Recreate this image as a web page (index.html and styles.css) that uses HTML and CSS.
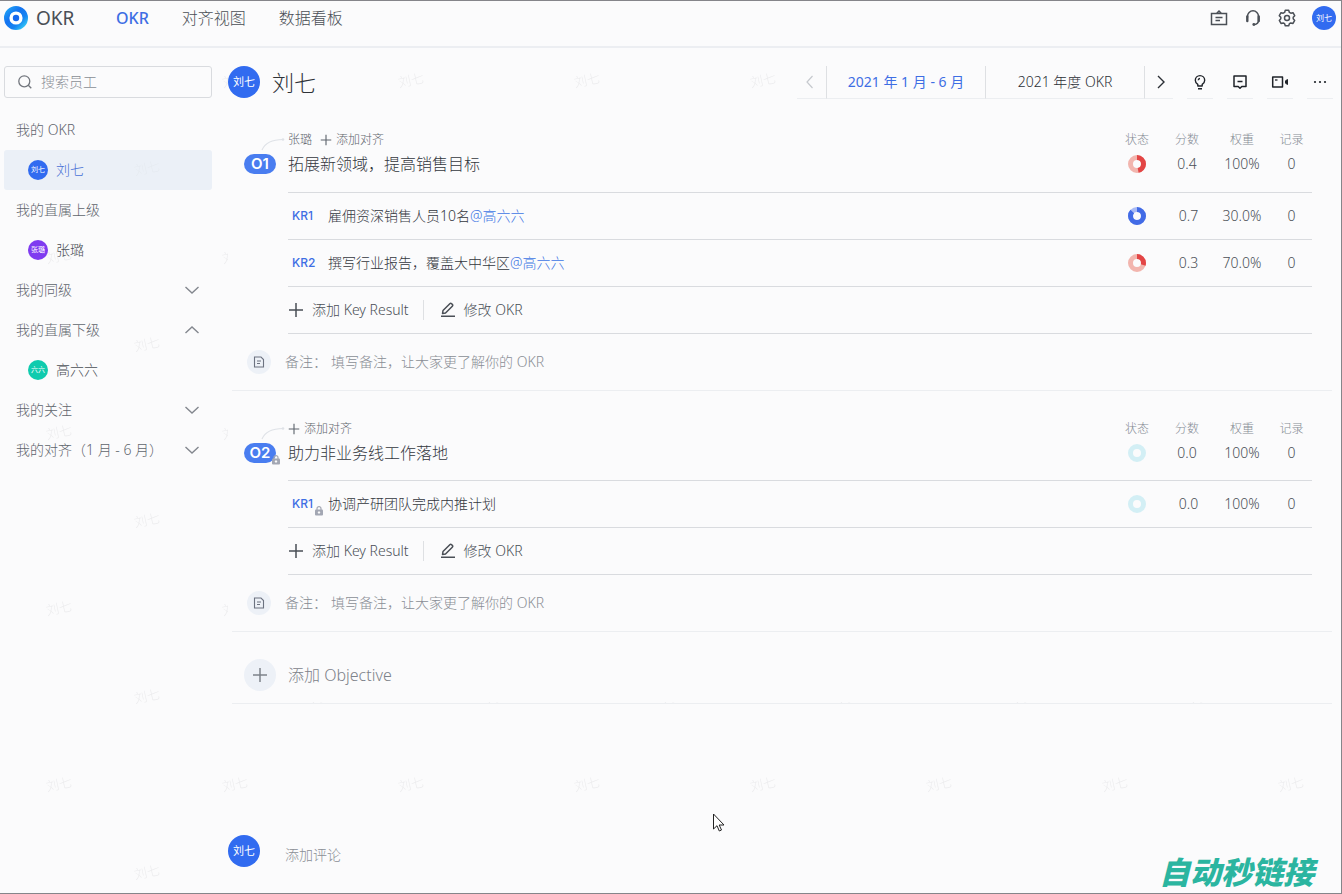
FILE: index.html
```html
<!DOCTYPE html>
<html lang="zh-CN">
<head>
<meta charset="utf-8">
<meta name="viewport" content="width=device-width, initial-scale=1">
<title>OKR</title>
<link rel="stylesheet" href="styles.css">
</head>
<body>
<svg class="defs" width="0" height="0" aria-hidden="true">
  <defs>
    <linearGradient id="logo-ring" x1="0" y1="0" x2="1" y2="1">
      <stop offset="0" stop-color="#1fa2f5"/><stop offset=".35" stop-color="#1473f0"/><stop offset=".7" stop-color="#1684f2"/><stop offset="1" stop-color="#35cdf5"/>
    </linearGradient>
    <symbol id="plus" viewBox="0 0 16 16"><path d="M8 1v14M1 8h14" fill="none" stroke="currentColor" stroke-width="1.5"/></symbol>
    <symbol id="down" viewBox="0 0 16 16"><path d="M1.5 5 8 11l6.500-6" fill="none" stroke="currentColor" stroke-width="1.400"/></symbol>
    <symbol id="up" viewBox="0 0 16 16"><path d="M1.500 11 8 5l6.500 6" fill="none" stroke="currentColor" stroke-width="1.400"/></symbol>
    <symbol id="pen" viewBox="0 0 16 16"><path d="M2.500 11.500 3 8.500l6.800-6.800a1.300 1.300 0 0 1 1.800 0l.7.7a1.300 1.300 0 0 1 0 1.800L5.500 11zM1 14.300h14" fill="none" stroke="currentColor" stroke-width="1.500" stroke-linejoin="round"/></symbol>
    <symbol id="note" viewBox="0 0 12 12"><path d="M1.500 1h6.500L10.500 3.500V11h-9zM4 5h4M4 7.500h3" fill="none" stroke="currentColor" stroke-width="1.100"/></symbol>
    <symbol id="lock" viewBox="0 0 10 10"><path d="M3 4V2.700a2 2 0 0 1 4 0V4" fill="none" stroke="#a3a7b3" stroke-width="1.200"/><rect x="1" y="3.500" width="8" height="6" rx="1" fill="#a3a7b3"/><path d="M5 5v3M3.800 6.500h2.400" stroke="#fff" stroke-width=".9"/></symbol>
    <symbol id="curve" viewBox="0 0 56 24"><path d="M30 20C33 13 40 9.500 51 9.500" fill="none" stroke="#dfe2e7" stroke-width="1.200"/><circle cx="51" cy="9.500" r="1.300" fill="#dfe2e7"/></symbol>
    <pattern id="marks" width="176" height="176" patternUnits="userSpaceOnUse">
      <text class="mark" x="46" y="85" transform="rotate(-12 59 80)">刘七</text>
      <text class="mark" x="134" y="173" transform="rotate(-12 147 168)">刘七</text>
    </pattern>
  </defs>
</svg>

<div class="app">
  <svg class="marks-layer" aria-hidden="true">
    <rect width="228" height="894" fill="url(#marks)"/>
    <rect x="390" y="60" width="400" height="45" fill="url(#marks)"/>
    <rect x="228" y="702" width="1114" height="100" fill="url(#marks)"/>
  </svg>

  <header class="topbar">
    <div class="brand">
      <svg width="24" height="24" viewBox="0 0 24 24" aria-hidden="true"><circle cx="12" cy="12" r="9.300" fill="#fff" stroke="url(#logo-ring)" stroke-width="5.400"/><circle cx="12" cy="12" r="3.200" fill="#1668ee"/></svg>
      <span>OKR</span>
    </div>
    <nav class="topnav">
      <a href="#" class="active">OKR</a>
      <a href="#">对齐视图</a>
      <a href="#">数据看板</a>
    </nav>
    <div class="tools">
      <button aria-label="工作台"><svg width="18" height="18" viewBox="0 0 18 18"><path d="M1.500 4.500h15v11h-15zM6.500 4.500 9 2l2.500 2.500M5.500 8.500h7M5.500 11.500h4.500" fill="none" stroke="currentColor" stroke-width="1.500"/></svg></button>
      <button aria-label="客服"><svg width="18" height="18" viewBox="0 0 18 18"><path d="M3.500 8.500V7.300a5.500 5.500 0 0 1 11 0v4.200c0 2-1.500 3.700-4.300 4.200" fill="none" stroke="currentColor" stroke-width="1.500"/><path d="M3.300 7.500v4.500M14.700 7.500v4.500" stroke="currentColor" stroke-width="2.400" stroke-linecap="round"/><circle cx="9.800" cy="15.500" r="1.400" fill="currentColor"/></svg></button>
      <button aria-label="设置"><svg width="18" height="18" viewBox="0 0 18 18"><path d="M7.300 1.300h3.400l.7 2.100 1.400.8 2.200-.5 1.700 3-1.500 1.600v1.500l1.500 1.600-1.700 3-2.200-.5-1.400.8-.7 2.100H7.300l-.7-2.100-1.400-.8-2.200.5-1.700-3 1.500-1.600V8.300L1.300 6.700l1.700-3 2.200.5 1.400-.8z" fill="none" stroke="currentColor" stroke-width="1.500" stroke-linejoin="round"/><circle cx="9" cy="9" r="2.500" fill="none" stroke="currentColor" stroke-width="1.500"/></svg></button>
      <span class="avatar avatar-m">刘七</span>
    </div>
  </header>

  <div class="body">
    <aside class="sidebar">
      <label class="search">
        <svg width="16" height="16" viewBox="0 0 16 16" aria-hidden="true"><circle cx="7.300" cy="7.300" r="5.500" fill="none" stroke="currentColor" stroke-width="1.300"/><path d="m11.300 11.300 3 3" stroke="currentColor" stroke-width="1.300"/></svg>
        <input type="text" placeholder="搜索员工" aria-label="搜索员工">
      </label>
      <div class="side-row">我的 OKR</div>
      <a href="#" class="person selected"><span class="avatar avatar-s">刘七</span>刘七</a>
      <div class="side-row">我的直属上级</div>
      <a href="#" class="person"><span class="avatar avatar-s purple">张璐</span>张璐</a>
      <button class="side-row">我的同级<svg width="16" height="16"><use href="#down"/></svg></button>
      <button class="side-row">我的直属下级<svg width="16" height="16"><use href="#up"/></svg></button>
      <a href="#" class="person"><span class="avatar avatar-s green">六六</span>高六六</a>
      <button class="side-row">我的关注<svg width="16" height="16"><use href="#down"/></svg></button>
      <button class="side-row">我的对齐（1 月 - 6 月）<svg width="16" height="16"><use href="#down"/></svg></button>
    </aside>

    <main class="main">
      <div class="profile">
        <span class="avatar">刘七</span>
        <h1>刘七</h1>
        <div class="periods">
          <button class="arrow" aria-label="上一周期" disabled><svg width="16" height="16" viewBox="0 0 16 16"><path d="M8.500 2 3 8l5.500 6" fill="none" stroke="currentColor" stroke-width="1.200"/></svg></button>
          <button class="period current">2021 年 1 月 - 6 月</button>
          <button class="period">2021 年度 OKR</button>
          <button class="arrow next" aria-label="下一周期"><svg width="16" height="16" viewBox="0 0 16 16"><path d="m7 2 6 6-6 6" fill="none" stroke="currentColor" stroke-width="1.400"/></svg></button>
        </div>
        <div class="actions">
          <button aria-label="提示"><svg width="16" height="16" viewBox="0 0 16 16"><path d="M5.800 12v-1.600C4.200 9.400 3.300 8 3.300 6.300a4.700 4.700 0 0 1 9.400 0c0 1.700-.9 3.100-2.500 4.100V12zM8 4.500a2 2 0 0 0-1.800 1.800M6 14.700h4" fill="none" stroke="currentColor" stroke-width="1.400" stroke-linejoin="round"/></svg></button>
          <button aria-label="评论"><svg width="16" height="16" viewBox="0 0 16 16"><path d="M2 2h12v10.500H9.800L8 14.300l-1.800-1.800H2zM5.500 7.500h5" fill="none" stroke="currentColor" stroke-width="1.500" stroke-linejoin="round"/></svg></button>
          <button aria-label="视频"><svg width="18" height="16" viewBox="0 0 18 16"><path d="M1.700 3h9.800v10H1.700z" fill="none" stroke="currentColor" stroke-width="1.500" stroke-linejoin="round"/><path d="M4 6h2.500" stroke="currentColor" stroke-width="1.300"/><path d="M14.500 6.800 16.500 5.500v5l-2-1.300z" fill="currentColor" stroke="currentColor"/></svg></button>
          <button aria-label="更多"><svg width="16" height="16" viewBox="0 0 16 16" fill="currentColor"><circle cx="3" cy="8" r="1.100"/><circle cx="8" cy="8" r="1.100"/><circle cx="13" cy="8" r="1.100"/></svg></button>
        </div>
      </div>

      <section class="objective">
        <div class="marker">
          <svg width="56" height="24" aria-hidden="true"><use href="#curve"/></svg>
          <span class="badge">O1</span>
        </div>
        <div class="content">
          <table>
            <thead><tr>
              <td class="align"><div class="align-items"><span>张璐</span><button><svg width="12" height="12"><use href="#plus"/></svg>添加对齐</button></div></td>
              <th class="c-status">状态</th><th class="c-score">分数</th><th class="c-weight">权重</th><th class="c-record">记录</th>
            </tr></thead>
            <tbody>
              <tr class="title-row"><td><h2>拓展新领域，提高销售目标</h2></td>
                <td><svg class="ring" width="18" height="18" viewBox="0 0 18 18"><circle cx="9" cy="9" r="6.500" stroke="#f2b5ae"/><circle cx="9" cy="9" r="6.500" stroke="#e34545" pathLength="100" stroke-dasharray="47 100" transform="rotate(-90 9 9)"/></svg></td>
                <td>0.4</td><td>100%</td><td>0</td></tr>
              <tr class="kr-row"><td><div class="kr"><b>KR1</b><span>雇佣资深销售人员10名<a href="#">@高六六</a></span></div></td>
                <td><svg class="ring" width="18" height="18" viewBox="0 0 18 18"><circle cx="9" cy="9" r="6.500" stroke="#a9baf5"/><circle cx="9" cy="9" r="6.500" stroke="#426be6" pathLength="100" stroke-dasharray="87 100" transform="rotate(-90 9 9)"/></svg></td>
                <td class="score">0.7</td><td>30.0%</td><td>0</td></tr>
              <tr class="kr-row"><td><div class="kr"><b>KR2</b><span>撰写行业报告，覆盖大中华区<a href="#">@高六六</a></span></div></td>
                <td><svg class="ring" width="18" height="18" viewBox="0 0 18 18"><circle cx="9" cy="9" r="6.500" stroke="#f2b5ae"/><circle cx="9" cy="9" r="6.500" stroke="#e34545" pathLength="100" stroke-dasharray="30 100" transform="rotate(-90 9 9)"/></svg></td>
                <td class="score">0.3</td><td>70.0%</td><td>0</td></tr>
            </tbody>
          </table>
          <div class="edit">
            <button><svg width="16" height="16"><use href="#plus"/></svg>添加 Key Result</button>
            <button><svg width="16" height="16"><use href="#pen"/></svg>修改 OKR</button>
          </div>
        </div>
        <label class="remark"><span class="note-icon"><svg width="12" height="12"><use href="#note"/></svg></span><span>备注：</span><input type="text" placeholder="填写备注，让大家更了解你的 OKR"></label>
      </section>

      <section class="objective">
        <div class="marker">
          <svg width="56" height="24" aria-hidden="true"><use href="#curve"/></svg>
          <span class="badge">O2<svg class="lock" width="10" height="10"><use href="#lock"/></svg></span>
        </div>
        <div class="content">
          <table>
            <thead><tr>
              <td class="align"><div class="align-items"><button><svg width="12" height="12"><use href="#plus"/></svg>添加对齐</button></div></td>
              <th class="c-status">状态</th><th class="c-score">分数</th><th class="c-weight">权重</th><th class="c-record">记录</th>
            </tr></thead>
            <tbody>
              <tr class="title-row"><td><h2>助力非业务线工作落地</h2></td>
                <td><svg class="ring" width="18" height="18" viewBox="0 0 18 18"><circle cx="9" cy="9" r="6.500" stroke="#d3eff5"/></svg></td>
                <td>0.0</td><td>100%</td><td>0</td></tr>
              <tr class="kr-row"><td><div class="kr"><b>KR1<svg class="lock" width="10" height="10"><use href="#lock"/></svg></b><span>协调产研团队完成内推计划</span></div></td>
                <td><svg class="ring" width="18" height="18" viewBox="0 0 18 18"><circle cx="9" cy="9" r="6.500" stroke="#d3eff5"/></svg></td>
                <td class="score">0.0</td><td>100%</td><td>0</td></tr>
            </tbody>
          </table>
          <div class="edit">
            <button><svg width="16" height="16"><use href="#plus"/></svg>添加 Key Result</button>
            <button><svg width="16" height="16"><use href="#pen"/></svg>修改 OKR</button>
          </div>
        </div>
        <label class="remark"><span class="note-icon"><svg width="12" height="12"><use href="#note"/></svg></span><span>备注：</span><input type="text" placeholder="填写备注，让大家更了解你的 OKR"></label>
      </section>

      <button class="add-objective"><span class="add-icon"><svg width="16" height="16"><use href="#plus"/></svg></span>添加 Objective</button>

      <div class="comment">
        <span class="avatar">刘七</span>
        <input type="text" placeholder="添加评论" aria-label="添加评论">
      </div>
    </main>
  </div>

  <svg class="pointer" width="14" height="20" viewBox="0 0 14 20" aria-hidden="true"><path d="M1.500 1v15l3.500-3.300 2.300 5.300 2.200-1-2.300-5h4.800z" fill="#fff" stroke="#222" stroke-width="1"/></svg>
  <div class="stamp">自动秒链接</div>
</div>
</body>
</html>
```

FILE: styles.css
```css
* { box-sizing: border-box; }

body {
  margin: 0;
  background: #fbfbfc;
  color: #4a4f56;
  font: 300 14px/20px "Noto Sans", "Noto Sans CJK SC", sans-serif;
}

button, input {
  padding: 0;
  border: 0;
  background: none;
  color: inherit;
  font: inherit;
}

input { outline: 0; min-width: 0; }
input::placeholder { color: #8a8e95; opacity: 1; }
a { color: inherit; text-decoration: none; }
svg { display: block; flex: none; }
h1, h2 { margin: 0; font-weight: 300; }

.defs { position: absolute; }

.app {
  position: relative;
  display: flex;
  flex-direction: column;
  min-height: 100vh;
  border: solid #85858a;
  border-width: 1px 1px 1px 0;
}

.marks-layer {
  position: absolute;
  top: -1px;
  left: 0;
  width: 100%;
  height: 100%;
  pointer-events: none;
}

.mark { font-size: 13px; fill: #ececee; }

/* Top bar */
.topbar {
  position: relative;
  display: flex;
  align-items: center;
  height: 47px;
  padding: 0 5px 11px 4px;
  border-bottom: 2px solid #eceef2;
  background: #fbfbfc;
}

.brand {
  display: flex;
  align-items: center;
  gap: 8px;
  width: 112px;
  font-size: 19px;
  font-weight: 400;
}

.topnav { display: flex; gap: 33px; font-size: 16px; }
.topnav .active { color: #3e6ee4; font-weight: 500; }

.tools {
  display: flex;
  align-items: center;
  gap: 16px;
  margin-left: auto;
}

.avatar {
  display: inline-flex;
  flex: none;
  align-items: center;
  justify-content: center;
  width: 32px;
  height: 32px;
  border-radius: 50%;
  background: #316bf0;
  color: #fff;
  font-size: 11px;
  font-weight: 400;
  line-height: 12px;
}

.avatar-m { width: 24px; height: 24px; font-size: 8px; }
.avatar-s { width: 20px; height: 20px; font-size: 7px; }
.purple { background: #7f3bf0; }
.green { background: #0fcbae; }

/* Columns */
.body { position: relative; display: flex; flex: 1; }

.sidebar {
  display: flex;
  flex-direction: column;
  flex: none;
  width: 212px;
  padding: 18px 0 0 4px;
}

.search {
  display: flex;
  align-items: center;
  gap: 8px;
  height: 32px;
  margin-bottom: 12px;
  padding: 0 12px;
  border: 1px solid #d9dbdf;
  border-radius: 3px;
  background: #fbfbfc;
  color: #73777e;
}

.search input { flex: 1; }

.side-row, .person {
  display: flex;
  align-items: center;
  height: 40px;
  padding: 0 12px;
  text-align: left;
}

.side-row { justify-content: space-between; color: #5f656d; }
.side-row svg { color: #83878e; }
.person { gap: 8px; padding-left: 24px; }
.selected { border-radius: 3px; background: rgba(225, 233, 244, .6); color: #4971d6; }

.main {
  display: flex;
  flex: 1;
  flex-direction: column;
  min-width: 0;
  padding: 18px 9px 26px 16px;
}

.profile { display: flex; align-items: center; margin-bottom: 4px; }
.profile h1 { margin-left: 12px; color: #2f3338; font-size: 22px; line-height: 32px; }

.periods {
  display: flex;
  height: 33px;
  margin-left: auto;
  margin-bottom: -1px;
  color: #2b2f36;
}

.periods button { border-bottom: 1px solid #eceef1; }
.arrow { display: grid; place-items: center; width: 29px; }
.arrow:disabled { color: #c6c9ce; }
.period { width: 159px; }
.period, .next { border-left: 1px solid #dee0e3; }
.periods .current { color: #3e6ee4; font-weight: 400; }

.actions { display: flex; gap: 14px; margin: 0 -1px -1px 14px; color: #1f2329; }
.actions button {
  display: grid;
  place-items: center;
  width: 26px;
  height: 33px;
  border-bottom: 1px solid #eceef1;
}

/* Objectives */
.objective {
  display: grid;
  grid-template-columns: 56px 1fr;
  margin-left: 4px;
  padding-top: 28px;
  border-bottom: 1px solid #eceef1;
}

.badge {
  position: relative;
  display: block;
  width: 32px;
  height: 20px;
  margin-left: 12px;
  border-radius: 10px;
  background: #497df0;
  color: #fff;
  font: 600 15px/20px Inter, sans-serif;
  text-align: center;
}

.lock { position: absolute; right: -5px; bottom: -2px; }
.content { margin-right: 20px; }

table { width: 100%; border-collapse: collapse; table-layout: fixed; }
th, td { padding: 0; text-align: center; font-weight: 300; }
th { color: #858b94; font-size: 12px; }
thead td, thead th { height: 18px; padding-top: 2px; line-height: 16px; }
td:first-child { text-align: left; }
.c-status { width: 48px; }
.c-score { width: 52px; }
.c-weight { width: 58px; }
.c-record { width: 41px; }

.align-items, .align-items button { display: flex; align-items: center; }
.align-items { gap: 8px; font-size: 12px; line-height: 16px; color: #5f656d; }
.align-items button { gap: 4px; }

.title-row td { height: 44px; padding-bottom: 11px; border-bottom: 1px solid #d9dbdf; }
.kr-row td { height: 47px; border-bottom: 1px solid #d9dbdf; }
.kr-row .score { padding-left: 3px; }
h2 { color: #33373e; font-size: 16px; line-height: 24px; }

.kr { display: flex; align-items: center; padding-left: 4px; color: #33373e; }
.kr b {
  position: relative;
  width: 36px;
  color: #3e6ee4;
  font: 500 12px/20px Inter, sans-serif;
}
.kr .lock { right: 4px; }
.kr a { color: #3e76e4; }

.ring { margin: 0 auto; }
.ring circle { fill: none; stroke-width: 5; }

.edit { display: flex; align-items: center; height: 47px; border-bottom: 1px solid #d9dbdf; }
.edit button { display: flex; align-items: center; gap: 8px; }
.edit button + button { margin-left: 14px; padding-left: 16px; border-left: 1px solid #dee0e3; }

.remark {
  display: flex;
  grid-column: 1 / -1;
  align-items: center;
  height: 56px;
  padding-left: 15px;
  color: #858a92;
}

.note-icon, .add-icon {
  display: grid;
  flex: none;
  place-items: center;
  border-radius: 50%;
  background: #edf1f7;
}
.note-icon { width: 24px; height: 24px; margin-right: 14px; color: #6c7280; }
.remark input { flex: 1; margin-left: 4px; }

.add-objective {
  display: flex;
  align-items: center;
  gap: 12px;
  height: 72px;
  margin-left: 4px;
  padding: 27px 0 12px 12px;
  border-bottom: 1px solid #eceef1;
  color: #7d828a;
  font-size: 16px;
}
.add-icon { width: 32px; height: 32px; }

.comment { display: flex; align-items: center; gap: 25px; margin-top: auto; }
.comment input { flex: 1; padding-top: 8px; }

.pointer { position: absolute; left: 712px; top: 812px; }

.stamp {
  position: absolute;
  right: 27px;
  bottom: 4px;
  color: #2bb5a0;
  font: italic 900 31px/36px "Noto Sans CJK SC", sans-serif;
}
```
